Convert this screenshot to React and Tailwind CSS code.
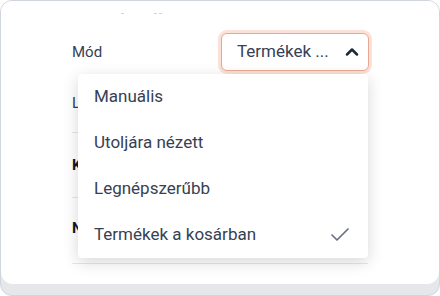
import React from 'react';
import { Check, ChevronUp } from 'lucide-react';

const options = ['Manuális', 'Utoljára nézett', 'Legnépszerűbb', 'Termékek a kosárban'];

const App = () => {
    const selected = 'Termékek a kosárban';

    return (
        <div className="w-[440px] h-[296px] bg-white" style={{ fontFamily: 'Roboto, "Noto Sans", sans-serif' }}>
            <div className="h-[296px] rounded-xl border border-gray-300 bg-gray-200 overflow-hidden">
                <div className="relative h-[283px] bg-white rounded-b-xl px-[71px]">
                    {/* clipped heading remnants */}
                    <div className="h-[29px] flex items-start pt-[12px]">
                        <span className="ml-[49px] w-[3px] h-[1px] bg-gray-300" />
                        <span className="ml-[30px] w-[3px] h-[1px] bg-gray-300" />
                        <span className="ml-[2px] w-[3px] h-[1px] bg-gray-300" />
                    </div>

                    <div className="h-[44px] flex items-center justify-between">
                        <span className="text-[15px] text-gray-700">Mód</span>
                        <button className="-mr-px w-[148px] h-[38px] flex items-center justify-between pl-[15px] pr-[6px] rounded-md bg-white border border-[#eba891] ring-[3px] ring-[#fbe1d7] text-[17px] text-gray-700">
                            <span>Termékek ...</span>
                            <ChevronUp size={20} strokeWidth={3} className="text-gray-800" />
                        </button>
                    </div>

                    {/* rows behind the open dropdown, only their first letter shows */}
                    <div className="h-[59px] flex items-center border-b border-gray-200">
                        <span className="text-[15px] text-gray-700">L</span>
                    </div>
                    <div className="h-[65px] flex items-center border-b border-gray-200 pt-px">
                        <span className="text-[15px] font-bold text-gray-900">K</span>
                    </div>
                    <div className="h-[66px] flex items-center border-b border-gray-200 pb-[5px]">
                        <span className="text-[15px] font-bold text-gray-900">N</span>
                    </div>

                    {/* open dropdown */}
                    <div className="absolute left-[77px] top-[73px] w-[290px] bg-white shadow-[0_4px_16px_rgba(0,0,0,0.16)] rounded-sm">
                        {options.map((opt) => (
                            <div key={opt} className="h-[46px] flex items-center justify-between pl-4 pr-4 text-[17px] text-gray-700">
                                <span>{opt}</span>
                                {opt === selected && <Check size={24} strokeWidth={1.75} className="text-gray-500" />}
                            </div>
                        ))}
                    </div>
                </div>
            </div>
        </div>
    );
};

export default App;
